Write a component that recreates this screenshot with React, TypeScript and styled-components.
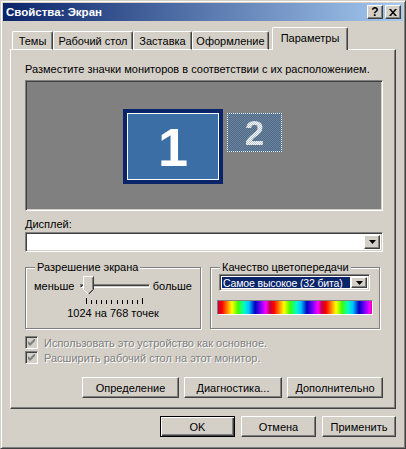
import React from 'react';
import styled, {createGlobalStyle, css} from 'styled-components';

const GlobalStyle = createGlobalStyle`
	html, body {
		margin: 0;
		padding: 0;
		background: #ffffff;
	}
	body {
		font-family: 'Liberation Sans', Arial, sans-serif;
		font-size: 11px;
		color: #000000;
	}
`;

const raised = css`
	border: 1px solid;
	border-color: #ffffff #404040 #404040 #ffffff;
	box-shadow: inset -1px -1px #808080;
`;

const sunken = css`
	border: 1px solid;
	border-color: #808080 #ffffff #ffffff #808080;
	box-shadow: inset 1px 1px #404040, inset -1px -1px #d4d0c8;
`;

const Window = styled.div`
	width: 406px;
	height: 449px;
	box-sizing: border-box;
	background: #d4d0c8;
	border: 1px solid;
	border-color: #d4d0c8 #404040 #404040 #d4d0c8;
	box-shadow: inset 1px 1px #ffffff, inset -1px -1px #808080;
	padding: 2px;
	display: flex;
	flex-direction: column;
`;

const TitleBar = styled.div`
	height: 18px;
	display: flex;
	align-items: center;
	padding: 0 2px 0 3px;
	background: linear-gradient(to right, #0a246a, #a6caf0);
`;

const Title = styled.div`
	flex: 1;
	color: #ffffff;
	font-weight: bold;
	font-size: 11.5px;
`;

const CaptionButton = styled.div`
	${raised};
	width: 14px;
	height: 12px;
	margin-left: 2px;
	background: #d4d0c8;
	display: flex;
	align-items: center;
	justify-content: center;
	font-weight: bold;
	font-size: 12px;
	line-height: 12px;
`;

const Body = styled.div`
	flex: 1;
	display: flex;
	flex-direction: column;
	padding: 6px 7px 0 7px;
`;

const TabStrip = styled.div`
	height: 23px;
	display: flex;
	align-items: flex-end;
	padding-left: 2px;
	position: relative;
	z-index: 1;
	margin-bottom: -1px;
`;

const Tab = styled.div<{$w: number; $active?: boolean}>`
	box-sizing: border-box;
	width: ${p => p.$w}px;
	height: ${p => (p.$active ? 23 : 19)}px;
	margin-left: ${p => (p.$active ? 3 : 0)}px;
	display: flex;
	align-items: ${p => (p.$active ? 'center' : 'flex-end')};
	justify-content: center;
	padding-bottom: ${p => (p.$active ? 3 : 2)}px;
	background: #d4d0c8;
	border-top: 1px solid #ffffff;
	border-left: 1px solid #ffffff;
	border-right: 1px solid #404040;
	border-radius: 2px 2px 0 0;
	box-shadow: inset -1px 0 #808080;
	white-space: nowrap;
	${p =>
		!p.$active &&
		css`
			border-bottom: 1px solid #ffffff;
		`}
`;

const Panel = styled.div`
	box-sizing: border-box;
	height: 360px;
	border: 1px solid;
	border-color: #ffffff #404040 #404040 #ffffff;
	box-shadow: inset -1px -1px #808080;
	padding: 12px 12px 0 14px;
	display: flex;
	flex-direction: column;
`;

const Hint = styled.div`
	line-height: 14px;
	margin-bottom: 4px;
	white-space: nowrap;
`;

const MonitorArea = styled.div`
	${sunken};
	box-sizing: border-box;
	height: 131px;
	background: #808080;
	display: flex;
	justify-content: center;
	align-items: flex-start;
	padding: 28px 3px 0 0;
	gap: 4px;
`;

const MonitorPrimary = styled.div`
	box-sizing: border-box;
	width: 100px;
	height: 75px;
	background: #0a246a;
	padding: 4px;
`;

const Screen = styled.div`
	box-sizing: border-box;
	height: 100%;
	border: 1px solid #ffffff;
	background: #3a6ea5;
	display: flex;
	align-items: center;
	justify-content: center;
	color: #ffffff;
	font: bold 54px 'Liberation Sans', Arial, sans-serif;
	line-height: 1;
`;

const MonitorGhost = styled.div`
	box-sizing: border-box;
	width: 55px;
	height: 39px;
	margin-top: 4px;
	border: 1px dotted #ffffff;
	background: repeating-conic-gradient(#3a6ea5 0 25%, #808080 0 50%) 0 0 / 2px 2px;
	display: flex;
	align-items: center;
	justify-content: center;
	font: bold 35px 'Liberation Sans', Arial, sans-serif;
	line-height: 1;
`;

const Dithered = styled.span`
	background: repeating-conic-gradient(#ffffff 0 25%, #b8c4d4 0 50%) 0 0 / 2px 2px;
	-webkit-background-clip: text;
	background-clip: text;
	color: transparent;
`;

const Label = styled.div`
	line-height: 14px;
	margin-top: 6px;
	margin-bottom: 1px;
`;

const Combo = styled.div<{$w?: number; $h: number}>`
	${sunken};
	box-sizing: border-box;
	width: ${p => (p.$w ? `${p.$w}px` : 'auto')};
	height: ${p => p.$h}px;
	background: #ffffff;
	display: flex;
	align-items: stretch;
	padding: 2px;
`;

const ComboValue = styled.div<{$selected?: boolean}>`
	flex: 1;
	display: flex;
	align-items: center;
	padding-left: 1px;
	margin-right: 1px;
	white-space: nowrap;
	overflow: hidden;
	${p =>
		p.$selected &&
		css`
			background: #0a246a;
			color: #ffffff;
			font-size: 10.5px;
			letter-spacing: -0.15px;
		`}
`;

const DropButton = styled.div`
	${raised};
	box-sizing: border-box;
	width: 16px;
	background: #d4d0c8;
	display: flex;
	align-items: center;
	justify-content: center;
`;

const Groups = styled.div`
	display: flex;
	gap: 9px;
	margin-top: 9px;
`;

const Group = styled.fieldset<{$w: number}>`
	box-sizing: border-box;
	width: ${p => p.$w}px;
	height: 68px;
	margin: 0;
	min-width: 0;
	padding: 0 8px 0 8px;
	border: 1px solid #808080;
	box-shadow: inset 1px 1px #ffffff, 1px 1px #ffffff;
`;

const Legend = styled.legend`
	line-height: 13px;
	padding: 0 2px;
	margin-left: 1px;
	background: #d4d0c8;
`;

const SliderRow = styled.div`
	display: flex;
	align-items: flex-start;
	margin-top: 2px;
`;

const SliderText = styled.span`
	line-height: 14px;
	margin-top: 3px;
`;

const Slider = styled.div`
	position: relative;
	width: 70px;
	height: 30px;
	margin: 0 auto 0 6px;
`;

const Track = styled.div`
	${sunken};
	box-sizing: border-box;
	position: absolute;
	left: 0;
	right: 0;
	top: 8px;
	height: 4px;
	background: #d4d0c8;
`;

const Thumb = styled.svg`
	position: absolute;
	left: 3px;
	top: 0;
`;

const Ticks = styled.svg`
	position: absolute;
	left: 6px;
	top: 22px;
`;

const Resolution = styled.div`
	text-align: center;
	line-height: 14px;
`;

const ColorBar = styled.div`
	box-sizing: border-box;
	height: 15px;
	margin: 9px -2px 0 -2px;
	border: 1px solid;
	border-color: #808080 #ffffff #ffffff #808080;
	background: repeating-linear-gradient(
		90deg,
		#c00040 0,
		#ff0000 4px,
		#ff8000 9px,
		#ffff00 14px,
		#40ff00 20px,
		#00ffc0 26px,
		#00c0ff 31px,
		#0000c0 37px,
		#8000ff 43px,
		#ff00ff 48px,
		#c00040 52px
	);
`;

const Checks = styled.div`
	display: flex;
	flex-direction: column;
	margin-top: 6px;
`;

const Check = styled.div`
	display: flex;
	align-items: center;
	gap: 6px;
	height: 15px;
	color: #808080;
	text-shadow: 1px 1px #ffffff;
`;

const CheckBox = styled.div`
	${sunken};
	box-sizing: border-box;
	width: 13px;
	height: 13px;
	background: #d4d0c8;
	display: flex;
	align-items: center;
	justify-content: center;
`;

const ButtonRow = styled.div<{$top: number; $gap: number}>`
	display: flex;
	justify-content: flex-end;
	gap: ${p => p.$gap}px;
	margin-top: ${p => p.$top}px;
`;

const Button = styled.div<{$w: number; $default?: boolean}>`
	box-sizing: border-box;
	width: ${p => p.$w}px;
	height: 21px;
	background: #d4d0c8;
	display: flex;
	align-items: center;
	justify-content: center;
	${p =>
		p.$default
			? css`
					border: 1px solid #000000;
					box-shadow: inset 1px 1px #ffffff, inset -1px -1px #404040, inset -2px -2px #808080;
			  `
			: raised}
`;

const Arrow = () => (
	<svg width="7" height="4" viewBox="0 0 7 4">
		<path d="M0 0h7L3.5 4z" fill="#000" />
	</svg>
);

const CheckMark = () => (
	<svg width="7" height="7" viewBox="0 0 7 7">
		<path d="M0 2v3l2 2 5-5V-1L2 4z" fill="#808080" />
	</svg>
);

export default function App() {
	return (
		<>
			<GlobalStyle />
			<Window>
				<TitleBar>
					<Title>Свойства: Экран</Title>
					<CaptionButton>?</CaptionButton>
					<CaptionButton>
						<svg width="8" height="7" viewBox="0 0 8 7">
							<path d="M0 0h2l2 2.5L6 0h2L5 3.5 8 7H6L4 4.5 2 7H0l3-3.5z" fill="#000" />
						</svg>
					</CaptionButton>
				</TitleBar>
				<Body>
					<TabStrip>
						<Tab $w={41}>Темы</Tab>
						<Tab $w={80}>Рабочий стол</Tab>
						<Tab $w={59}>Заставка</Tab>
						<Tab $w={77}>Оформление</Tab>
						<Tab $w={76} $active>
							Параметры
						</Tab>
					</TabStrip>
					<Panel>
						<Hint>Разместите значки мониторов в соответствии с их расположением.</Hint>
						<MonitorArea>
							<MonitorPrimary>
								<Screen>1</Screen>
							</MonitorPrimary>
							<MonitorGhost>
								<Dithered>2</Dithered>
							</MonitorGhost>
						</MonitorArea>
						<Label>Дисплей:</Label>
						<Combo $h={20}>
							<ComboValue />
							<DropButton>
								<Arrow />
							</DropButton>
						</Combo>
						<Groups>
							<Group $w={176}>
								<Legend>Разрешение экрана</Legend>
								<SliderRow>
									<SliderText>меньше</SliderText>
									<Slider>
										<Track />
										<Thumb width="11" height="19" viewBox="0 0 11 19">
											<path d="M0.5 0.5h10v13l-5 5-5-5z" fill="#d4d0c8" />
											<path d="M0.5 13.5v-13h10" stroke="#fff" fill="none" />
											<path d="M10.5 0.5v13l-5 5" stroke="#404040" fill="none" />
											<path d="M9.5 1.5v12l-4 4" stroke="#808080" fill="none" />
											<path d="M0.5 13.5l5 5" stroke="#fff" fill="none" />
										</Thumb>
										<Ticks width="60" height="6" viewBox="0 0 60 6">
											{Array.from({length: 12}, (_, i) => {
												const x = Math.round((i * 56) / 11) + 0.5;
												const edge = i === 0 || i === 11;
												return <line key={i} x1={x} x2={x} y1={edge ? 0 : 2} y2={6} stroke="#000" />;
											})}
										</Ticks>
									</Slider>
									<SliderText>больше</SliderText>
								</SliderRow>
								<Resolution>1024 на 768 точек</Resolution>
							</Group>
							<Group $w={170}>
								<Legend>Качество цветопередачи</Legend>
								<Combo $w={151} $h={17}>
									<ComboValue $selected>Самое высокое (32 бита)</ComboValue>
									<DropButton>
										<Arrow />
									</DropButton>
								</Combo>
								<ColorBar />
							</Group>
						</Groups>
						<Checks>
							<Check>
								<CheckBox>
									<CheckMark />
								</CheckBox>
								Использовать это устройство как основное.
							</Check>
							<Check>
								<CheckBox>
									<CheckMark />
								</CheckBox>
								Расширить рабочий стол на этот монитор.
							</Check>
						</Checks>
						<ButtonRow $top={12} $gap={5}>
							<Button $w={97}>Определение</Button>
							<Button $w={98}>Диагностика...</Button>
							<Button $w={96}>Дополнительно</Button>
						</ButtonRow>
					</Panel>
					<ButtonRow $top={7} $gap={6}>
						<Button $w={75} $default>
							OK
						</Button>
						<Button $w={75}>Отмена</Button>
						<Button $w={74}>Применить</Button>
					</ButtonRow>
				</Body>
			</Window>
		</>
	);
}
